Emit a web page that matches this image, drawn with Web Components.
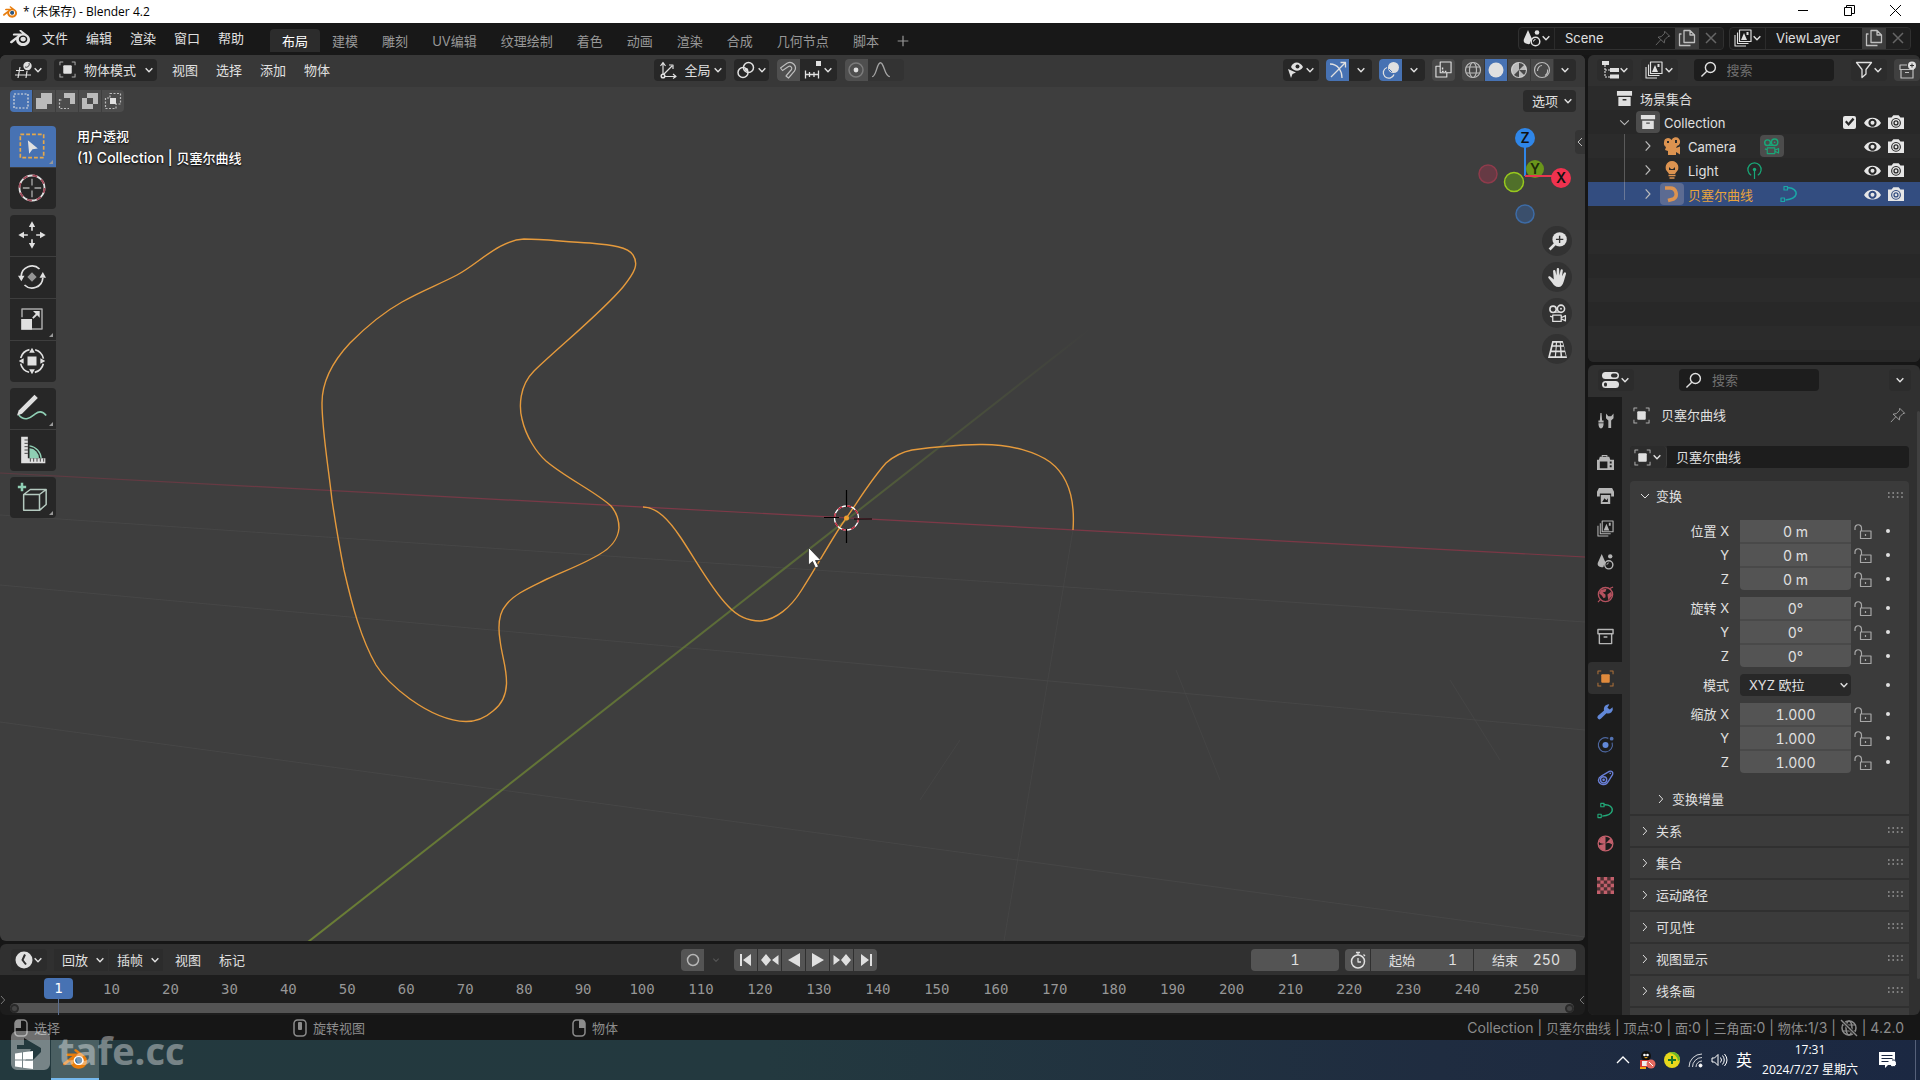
<!DOCTYPE html>
<html lang="zh-CN">
<head>
<meta charset="utf-8">
<title>* (未保存) - Blender 4.2</title>
<style>
html,body{margin:0;height:100%;overflow:hidden}
body{background:#161616;color:#e0e0e0;font:13px/18px Inter,"Noto Sans CJK SC",sans-serif}
</style>
</head>
<body>
<blender-app></blender-app>
<script>
const BASE = `
*{box-sizing:border-box}
:host{display:block}
button,input,select{appearance:none;font:inherit;color:inherit;background:none;border:0;margin:0;padding:0;outline:0;border-radius:0}
button{display:flex;align-items:center;justify-content:center;white-space:nowrap}
.dd{display:flex;align-items:center;justify-content:space-between;height:22px;padding:0 4px;background:#272727;border-radius:4px;flex:none}
.row{display:flex;align-items:center}
.sp{flex:1}
`;
function define(name, css, html, setup) {
  customElements.define(name, class extends HTMLElement {
    constructor() {
      super();
      const root = this.attachShadow({mode: 'open'});
      const t = document.createElement('template');
      t.innerHTML = `<style>${BASE}${css}</style>${typeof html === 'function' ? html(this) : html}`;
      root.append(t.content.cloneNode(true));
      if (setup) setup(root, this);
    }
  });
}

const LOGO = 'M12.51 13.214c.046-.8.438-1.506 1.03-2.006a3.424 3.424 0 0 1 2.212-.79c.85 0 1.631.3 2.211.79.592.5.983 1.206 1.028 2.005.045.823-.285 1.586-.865 2.153a3.389 3.389 0 0 1-2.374.938 3.393 3.393 0 0 1-2.376-.938c-.58-.567-.91-1.33-.865-2.152M7.35 14.831c.006.314.106.922.256 1.398a7.372 7.372 0 0 0 1.593 2.757 8.227 8.227 0 0 0 2.787 2.001 8.947 8.947 0 0 0 3.66.76 8.964 8.964 0 0 0 3.657-.772 8.285 8.285 0 0 0 2.785-2.01 7.428 7.428 0 0 0 1.592-2.762 6.964 6.964 0 0 0 .25-3.074 7.123 7.123 0 0 0-1.016-2.779 7.764 7.764 0 0 0-1.852-2.043h.002L13.566 2.55l-.02-.015c-.492-.378-1.319-.376-1.86.002-.547.382-.609 1.015-.123 1.415l-.001.001 3.126 2.543-9.53.01h-.013c-.788.001-1.545.518-1.695 1.172-.154.665.38 1.217 1.2 1.22V8.9l4.83-.01-8.62 6.617-.034.025c-.813.622-1.075 1.658-.563 2.315.52.667 1.625.668 2.447.004L7.414 14s-.069.52-.063.831zm12.09 1.741c-.97.988-2.326 1.548-3.795 1.55-1.47.004-2.827-.552-3.797-1.538a4.51 4.51 0 0 1-1.036-1.622 4.282 4.282 0 0 1 .282-3.519 4.702 4.702 0 0 1 1.153-1.371c.942-.768 2.141-1.183 3.396-1.185 1.256-.002 2.455.41 3.398 1.175.48.391.87.854 1.152 1.367a4.28 4.28 0 0 1 .522 1.706 4.236 4.236 0 0 1-.239 1.811 4.54 4.54 0 0 1-1.035 1.626';
const F = 'fill="currentColor" stroke="none"';
// Every glyph is drawn on an 18 by 18 grid.
const ICONS = {
  blender: `<g transform="scale(.75)"><path ${F} d="${LOGO}"/></g>`,
  blenderColor: `<g transform="scale(.75)"><circle cx="15.7" cy="13.2" r="6" fill="#fff" stroke="none"/><path fill="#e87d0d" stroke="none" d="${LOGO}"/><circle cx="15.7" cy="13.3" r="3.4" fill="#265787" stroke="none"/></g>`,
  chev: `<path stroke-width="2.6" d="M3 6l6 6 6-6"/>`,
  right: `<path d="M6 3l5.5 6L6 15"/>`,
  down: `<path d="M3 6l6 6 6-6"/>`,
  left: `<path d="M12 3L6 9l6 6"/>`,
  plus: `<path d="M9 1v16M1 9h16" stroke-width="1.8"/>`,
  cross: `<path d="M4 4l10 10M14 4L4 14"/>`,
  editor3d: `<path d="M5 6L3 17M12 10l-1 7M1 9.5h8M0 14h16" stroke-width="1.2"/><circle cx="12.5" cy="5" r="4.2" ${F}/><path d="M10 6a3 3 0 0 0 4-4" stroke="#272727" stroke-width=".8"/>`,
  object: `<rect x="4.5" y="4.5" width="9" height="9" rx="1" ${F}/><path opacity=".7" stroke-width="1.1" d="M1 4.5V1h3.5M13.5 1H17v3.5M17 13.5V17h-3.5M4.5 17H1v-3.5"/>`,
  orient: `<path d="M4 14V2M1.5 5L4 1.5 6.5 5M5.5 15.5h11M14 13l3 2.5-3 2M5 13l8-8M10 4h4v4" stroke-width="1.2"/><circle cx="4" cy="15" r="1.8"/>`,
  pivot: `<circle cx="11.5" cy="6.5" r="5"/><circle cx="6" cy="11.5" r="5"/><circle cx="9.5" cy="8.5" r="1.6" ${F}/>`,
  magnet: `<path opacity=".75" stroke-width="1.2" d="M1.5 7L8 2.2a5.6 5.6 0 0 1 7.4 8L9.5 17 7 15l5.500-6.500a2.200 2.200 0 0 0-3-3L3.500 9.500z"/>`,
  increment: `<path stroke-width="1.3" d="M1 13.5h14M1.5 9.5v8M5.5 11v5M10 11v5M14.5 9.5v8"/><rect x="12" y="0" width="5" height="5" ${F}/>`,
  prop: `<circle cx="9" cy="9" r="7" opacity=".3"/><circle cx="9" cy="9" r="2.4" ${F}/>`,
  falloff: `<path opacity=".65" stroke-width="1.2" d="M1 15c4 0 4-12.500 7.500-12.500S12 15 17 15"/>`,
  visibility: `<path d="M4 6c2-6 9-6 12 0-3 5-9 5-12 0z" ${F}/><circle cx="10.5" cy="5.5" r="2" fill="#272727" stroke="none"/><path ${F} d="M1 8l8 3.500-3.500 1.500-1.500 4z"/>`,
  gizmo: `<path stroke-width="1.3" d="M1 3c8 0 12 7 12 14M2 16L16 2M11.5 1.5H16.5V6.5"/>`,
  overlay: `<circle cx="11.5" cy="6.5" r="5.5" ${F}/><path stroke-width="1.3" d="M5 6.500a5.500 5.500 0 1 0 7 7"/><path stroke="#4772b3" d="M7 8l3 3" stroke-width="1"/>`,
  xray: `<rect x="5.5" y="1" width="11.5" height="11.5" stroke-width="1.2"/><path stroke-width="1.2" d="M5.5 5.5H1V17h11.5v-4.5"/><path d="M8 7v4h4" stroke-dasharray="2 1.2"/>`,
  wire: `<g opacity=".75" stroke-width="1.2"><circle cx="9" cy="9" r="7.5"/><ellipse cx="9" cy="9" rx="3.5" ry="7.5"/><path d="M2 6h14M2 12h14"/></g>`,
  solid: `<circle cx="9" cy="9" r="7.5" ${F}/>`,
  material: `<circle cx="9" cy="9" r="7.5" opacity=".8" stroke-width="1.2"/><path opacity=".75" ${F} d="M9 1.500A7.500 7.500 0 0 0 3.700 14.300L9 9zM9 9v7.500A7.500 7.500 0 0 0 14.300 14.300zM9 9h7.500A7.500 7.500 0 0 0 14.300 3.700z"/>`,
  rendered: `<circle cx="9" cy="9" r="7.5" opacity=".75" stroke-width="1.2"/><path opacity=".75" stroke-width="1.2" d="M4.500 10c0-3 2-5.500 4.500-5.500M12 14.500c2-1 3-3 2.500-6"/>`,
  selSet: `<rect x="2" y="2" width="14" height="14" stroke-dasharray="2 1.5" stroke-width="1.2"/>`,
  selAdd: `<path ${F} opacity=".75" d="M6 1h11v11h-5v5H1V6h5z"/>`,
  selSub: `<path ${F} opacity=".75" d="M6 1h11v11h-5V6H6z"/><path opacity=".75" d="M1.500 7v9.500h9.500M1.500 8H5" stroke-dasharray="2 1.5" stroke-width="1.2"/>`,
  selXor: `<path ${F} opacity=".75" fill-rule="evenodd" d="M6 1h11v11h-5v5H1V6h5zM6 6v6h6V6z"/>`,
  selAnd: `<path opacity=".75" d="M6 1.500h10.500V12H12v4.500H1.500V6H6z" stroke-dasharray="2 1.5" stroke-width="1.2"/><rect x="6" y="6" width="6" height="6" ${F}/>`,
  scene: `<path ${F} d="M5 1l4 9c0 1-2 2-2 4 0 2-3 1-5 0-1.500-1-1.500-3-1-4z"/><circle cx="12.5" cy="12.5" r="4.3"/><path d="M10.500 12.500a2 2 0 0 1 2-2" stroke-width="1"/><circle cx="14" cy="3.5" r="2.3" ${F}/>`,
  pin: `<path opacity=".6" stroke-width="1.1" d="M11 1.500l5.500 5.500-2 .5-3.500 3.500-.5 3.500L3.500 8l3.500-.5L10.500 4zM6.500 11L1 17"/>`,
  copy: `<path opacity=".8" stroke-width="1.3" d="M6 1.500h6l4.500 4.500v7.500H6zM12 1.500V6h4.500M3.500 5H1.500v11.500h11"/>`,
  layers: `<rect x="5.5" y="1" width="11.5" height="11.5" stroke-width="1.2"/><path ${F} d="M7 11l3-7 3 7zM12.500 3h2v3h-2z"/><path stroke-width="1.1" d="M3.500 3.500v11h11M1 6v11h11"/>`,
  tree: `<rect x="1" y="0" width="7" height="4" ${F}/><path d="M4 4v12h5M4 9h5" stroke-width="1.1" stroke-dasharray="2 1"/><rect x="9" y="7" width="9" height="4" ${F}/><rect x="9" y="13.5" width="9" height="4" ${F}/>`,
  search: `<circle cx="11" cy="6.8" r="5.3"/><path d="M7.200 10.800L1.500 16.500"/>`,
  filter: `<path stroke-width="1.3" d="M1.500 1.500h15l-5.500 7V13l-4 3.500v-8z"/>`,
  addColl: `<path opacity=".8" stroke-width="1.2" d="M9 4H2v4.500h14M3 8.500V17h12V9M7 11.500h4"/><circle cx="14" cy="4.5" r="4" ${F}/><path d="M14 2.500v4M12 4.500h4" stroke="#333" stroke-width="1"/>`,
  collection: `<path ${F} fill-rule="evenodd" d="M1 1h16v5H1zM2.500 7.500h13V17h-13zM7 9.500v1.500h4V9.500z"/>`,
  collTab: `<path stroke-width="1.5" d="M1 1.500h16v4.500H1zM2.500 6v10.500h13V6M7 9.500h4"/>`,
  camObj: `<path ${F} fill-rule="evenodd" d="M5 1a4 4 0 0 1 3.500 2A4.500 4.500 0 1 1 14 9l-1 2 4-1.500v8L13 15v3H5v-4l-3-1 1-3a4.300 4.300 0 0 1-2-4.500A4.500 4.500 0 0 1 5 1zM4 4v2h2V4zM12 3v3h2V3z"/>`,
  camData: `<circle cx="4.8" cy="5" r="3"/><circle cx="12.3" cy="4.5" r="3.4"/><path stroke-width="1.2" d="M6 7.800h5M4.500 10.500h8v6h-8zM12.500 13l4-2v5l-4-2M2 11.500l2.500 1"/><circle cx="12.3" cy="4.5" r=".9" ${F}/>`,
  lightObj: `<path ${F} fill-rule="evenodd" d="M9 0a6.500 6.500 0 0 1 4 11.500l-1 1.500H6l-1-1.500A6.500 6.500 0 0 1 9 0zM6 6l2 2h2l2-2v3H6z"/><path d="M5.500 14.500h7M6.500 17h5" stroke-width="1.5"/>`,
  lightData: `<path stroke-width="1.3" d="M5.500 14A7 7 0 1 1 12.500 14M9 9v9"/><circle cx="9" cy="8" r="1.8" ${F}/>`,
  curveObj: `<path stroke-width="3.6" stroke-linecap="butt" d="M2 3h5a6 6 0 0 1 3.500 11L5 15.500"/>`,
  curveData: `<path stroke-width="1.5" d="M7 3c6-1 10 3 9 6.500S11 14.500 5.500 15"/><rect x="4" y="1.5" width="3.5" height="3.5" stroke-width="1.2"/><rect x="1" y="13" width="3.5" height="3.5" stroke-width="1.2"/>`,
  eye: `<path ${F} fill-rule="evenodd" d="M0 9.500C3.500 2 14.500 2 18 9.500 14.500 16 3.500 16 0 9.500zM9 5a4.300 4.300 0 1 0 .01 0z"/><circle cx="9" cy="9.3" r="2.1" ${F}/>`,
  render: `<path ${F} fill-rule="evenodd" d="M0 4h4l2-2.500h6L14 4h4v13H0zM9 4.500a5.500 5.500 0 1 0 .01 0z"/><circle cx="9" cy="10" r="3.6" stroke-width="1.3"/><circle cx="9" cy="10" r="1.5" ${F}/>`,
  props: `<rect x="0" y="1" width="17" height="7" rx="3.5" ${F}/><rect x="9" y="2.5" width="6.5" height="4" rx="2" fill="#303030" stroke="none"/><rect x="0" y="10" width="17" height="7" rx="3.5" ${F}/><rect x="2" y="11.5" width="3" height="4" rx="1.5" fill="#303030" stroke="none"/>`,
  tool: `<path ${F} d="M3.600 1h1.200l.6 8H7v2H1.500V9H3zM1.500 12H7c0 3-1 5.500-2.800 5.500S1.500 15 1.500 12zM9.500 1.500v5L12 9v8h3V9l2.500-2.500v-5L15 4.500h-3z"/>`,
  renderTab: `<path ${F} fill-rule="evenodd" d="M0 6h2l1-3h2V1h6v2h2l1 3h4v11H0zM3 8v7h8V8zM13.500 8v2h2V8zM13.500 12v2h2v-2zM6 3h4V2H6z"/>`,
  output: `<path ${F} fill-rule="evenodd" d="M2 1h14l2 4v5h-3V7H3v3H0V5zM4 8.500h10V18H4zM5.500 16l2.500-4 2 2 1.500-2v4z"/>`,
  world: `<circle cx="9" cy="9" r="7.5"/><path ${F} d="M4 4l6-1-1 3-3 1 3 2v3l-2 1-2-3-2.500-2zM11 9l4-3 1 4-4 5z"/><path d="M13 3l4-2M1 17l3-3" stroke-width="1.2"/>`,
  wrench: `<path ${F} d="M16.500 4.500l-3 2.500-2.500-2 2-3.500A5 5 0 0 0 7.500 8L1 13.500a2 2 0 0 0 3.300 3L10 10.800a5 5 0 0 0 6.500-6.300z"/>`,
  particles: `<circle cx="9" cy="9.5" r="3.2" ${F}/><path opacity=".7" stroke-width="1.2" d="M12 2.500A7.500 7.500 0 1 0 16 7"/><circle cx="15.5" cy="2.8" r="2" ${F} opacity=".8"/>`,
  constraint: `<path stroke-width="1.4" d="M1.500 12a5.500 5.500 0 0 1 3-4.500L13 2.500c2.500-1 4.500 1 3.500 3.500L12 13a5.500 5.500 0 0 1-10.500-1z"/><circle cx="7" cy="11.5" r="3.3"/><circle cx="7" cy="11.5" r="1.4" ${F}/><circle cx="14" cy="4.5" r=".9" ${F}/>`,
  mat: `<circle cx="9" cy="9" r="7.8" stroke-width="1.4"/><path ${F} d="M9 1.500A7.500 7.500 0 0 0 2 7c1 2 4 3 7 2zM9 9c2-1 4-1 7 1a7.500 7.500 0 0 0-1.500-6.500zM2 11c2-1 5-1 7-2v7.500A7.500 7.500 0 0 1 2 11z" />`,
  checker: `<rect x="0" y="0" width="18" height="18" fill="currentColor" stroke="none" opacity=".3"/><path ${F} d="M0 0h3.600v3.600H0zM7.200 0h3.600v3.600H7.200zM14.400 0H18v3.600h-3.600zM3.600 3.600h3.600v3.600H3.600zM10.800 3.600h3.600v3.600h-3.600zM0 7.200h3.600v3.600H0zM7.200 7.200h3.600v3.600H7.200zM14.400 7.200H18v3.600h-3.600zM3.600 10.800h3.600v3.600H3.600zM10.800 10.800h3.600v3.600h-3.600zM0 14.400h3.600V18H0zM7.200 14.400h3.600V18H7.200zM14.400 14.400H18V18h-3.600z"/>`,
  lock: `<path opacity=".65" stroke-width="1.2" d="M1 8V6a3.200 3.200 0 0 1 6.500 0v3M6.500 9h10.500v7.500H6.500zM11.500 12v2"/>`,
  grip: `<path stroke="#999" stroke-width="1.6" stroke-dasharray="1.6 2.8" d="M2 6h15M2 10h15"/>`,
  clock: `<circle cx="9" cy="9" r="8.5" ${F}/><path d="M10 3.500L7.500 9l3.500 4.500" stroke="#303030" stroke-width="2"/>`,
  record: `<circle cx="9" cy="9" r="5.5" opacity=".7"/>`,
  first: `<path ${F} d="M3 3h2v12H3zM14 3v12L6 9z"/>`,
  prevKey: `<path ${F} d="M5 3l5 6-5 6-5-6zM17.500 4v10L11 9z"/>`,
  playBack: `<path ${F} d="M15 2v14L3 9z"/>`,
  play: `<path ${F} d="M3 2v14l12-7z"/>`,
  nextKey: `<path ${F} d="M13 3l5 6-5 6-5-6zM.5 4v10L7 9z"/>`,
  last: `<path ${F} d="M13 3h2v12h-2zM4 3v12l8-6z"/>`,
  timer: `<circle cx="9" cy="10.5" r="6.5"/><path d="M7 1.500h4M9 1.500v2.500M9 7v4h3M14.500 3.500l1.500 1.500" stroke-width="1.3"/>`,
  mouseL: `<rect x="3" y="1" width="12" height="16" rx="3.5"/><path ${F} d="M3 9V4.500A3.500 3.500 0 0 1 6.500 1H9v8z"/>`,
  mouseM: `<rect x="3" y="1" width="12" height="16" rx="3.5"/><rect x="7" y="3" width="4" height="8" rx="1" ${F}/>`,
  mouseR: `<rect x="3" y="1" width="12" height="16" rx="3.5"/><path ${F} d="M15 9V4.500A3.500 3.500 0 0 0 11.500 1H9v8z"/>`,
  offline: `<circle cx="9" cy="9" r="7"/><ellipse cx="9" cy="9" rx="3" ry="7"/><path d="M2.500 6h13M2.500 12h13" stroke-width="1"/><path d="M1 1l16 16" stroke="#161616" stroke-width="3"/><path d="M1 1l16 16"/>`,
  zoom: `<circle cx="11" cy="7" r="6.8" ${F}/><path d="M7 11l-5.500 5.500" stroke-width="2.6"/><path d="M11 3.500v7M7.500 7h7" stroke="#333" stroke-width="1.3"/>`,
  hand: `<path ${F} d="M5.500 11L4.800 3c0-1.600 2-1.600 2.300 0L8 7l.3-6C8.500-.4 10.400-.3 10.500 1l.3 6 1.200-5c.4-1.500 2.200-1 2 .5l-.7 5.300 1.700-3c.8-1.400 2.500-.5 2 1L15 12.500C14 16 12.500 18 10 18c-3 0-4.500-1.500-6-4L.4 9.500C-.3 8 1.300 7.300 2.400 8.300z"/>`,
  persp: `<path ${F} fill-rule="evenodd" d="M4 1h10l4 16H0zM5.200 2.500L4.700 5h2.500l.3-2.500zM8.600 2.500L8.400 5h3l-.3-2.500zM12 2.500l.4 2.500h2l-.7-2.500zM4.300 6.500l-.8 3.500H7l.3-3.500zM8.300 6.500L8 10h3.500l-.3-3.500zM12.500 6.500l.4 3.500H16l-1-3.500zM3 11.500l-1 4h4.400l.4-4zM7.900 11.500l-.3 4h4.300l-.3-4zM13 11.500l.4 4H17l-1-4z"/>`,
  tSelect: `<rect x="2" y="2" width="14" height="14" stroke="#e6a84a" stroke-width="1" stroke-dasharray="2.3 1.2"/><path ${F} d="M6.500 5.500l6 5-3.200.5-2 2.600z"/>`,
  tCursor: `<circle cx="9" cy="9" r="7.5" stroke-width="1.1"/><circle cx="9" cy="9" r="7.5" stroke="#a04858" stroke-width="1.1" stroke-dasharray="2.9 3"/><path stroke="#aaa" stroke-width=".8" d="M9 3.500v4M9 10.500v4M3.500 9h4M10.500 9h4"/>`,
  tMove: `<path ${F} d="M9 .8l1.900 3.400H7.100zM9 17.200l1.900-3.400H7.100zM.8 9l3.400-1.900v3.800zM17.200 9l-3.400-1.900v3.800z"/><path stroke-width="1" d="M9 4v2.500M9 11.500V14M4 9h2.500M11.500 9H14"/>`,
  tRotate: `<path stroke-width="1" d="M2.500 8.500a6.500 6.500 0 0 1 11-4.300M15.500 9.500a6.500 6.500 0 0 1-11 4.300"/><path ${F} d="M.6 8.200h3.900l-1.900 3.400zM13.500 9.400h3.900l-1.900-3.400z"/><path ${F} opacity=".6" d="M9 6.200L11.800 9 9 11.800 6.200 9z"/>`,
  tScale: `<path opacity=".7" stroke-width=".9" d="M3 8V3h12v12H9"/><rect x="2.5" y="9" width="6.5" height="6.5" ${F}/><path d="M9.500 8.500L12 6" stroke-width="1.1"/><path ${F} d="M13.600 4.200v4l-4-4z"/>`,
  tTransform: `<circle cx="9" cy="9" r="7" stroke-width="1" stroke-dasharray="7.5 3.5" stroke-dashoffset="-1.7"/><rect x="6.3" y="6.3" width="5.4" height="5.4" ${F}/><path ${F} d="M9 1l1.700 3H7.300zM9 17l1.700-3H7.300zM1 9l3-1.700v3.400zM17 9l-3-1.700v3.400z"/>`,
  tDraw: `<path stroke="#8fcfb4" stroke-width="1" d="M1 13c4 5 8 1 10-.5s4.500-1.500 6.500 1"/><path ${F} d="M10.500 1l2 2-9.500 9.500-3 1 1-3z"/>`,
  tMeasure: `<path ${F} d="M3 1h3.500v13H17v3H2.500V1z"/><path d="M7.500 6.500A8 8 0 0 1 14.500 14" stroke="#8fcfb4" stroke-width=".8"/><path fill="#8fcfb4" stroke="none" d="M7.500 8a6 6 0 0 1 5.700 6H7.500z"/><path stroke="#272727" stroke-width=".5" d="M4.500 3H6.500M4.500 5H6.500M4.500 7H6.500M4.500 9H6.500M4.500 11H6.500M8 14v2M10 14v2M12 14v2M14 14v2M16 14v2"/>`,
  tCube: `<path stroke-width="1.5" stroke="#8fcfb4" d="M.5 3h5M3 .5v5"/><path opacity=".9" stroke="#c4dbd0" stroke-width=".9" d="M4 7.500h9.500V17H4zM4 7.500l4-3h9.500v9l-4 3.500M13.500 7.500l4-3"/>`,
};
customElements.define('b-icon', class extends HTMLElement {
  constructor() { super(); this.attachShadow({mode: 'open'}); }
  connectedCallback() {
    const s = this.getAttribute('size') || 18;
    this.shadowRoot.innerHTML = `<style>:host{display:inline-flex;flex:none}svg{display:block;overflow:visible}</style>
      <svg width="${s}" height="${s}" viewBox="0 0 18 18" fill="none" stroke="currentColor" stroke-width="1.5" stroke-linejoin="round" aria-hidden="true">${ICONS[this.getAttribute('name')] || ''}</svg>`;
  }
});
const ic = (n, s) => `<b-icon name="${n}"${s ? ` size="${s}"` : ''}></b-icon>`;
const dd = (n, label, w, s) => `<button class="dd" aria-label="${label}" style="width:${w}px">${ic(n, s)}${ic('chev', 10)}</button>`;

define('title-bar', `
:host{height:23px;background:#fff;color:#000;font:12px/23px "Open Sans","Noto Sans CJK SC",sans-serif}
.row{height:23px;padding:0 2px 0 3px;gap:6px}
.w{display:flex;align-self:flex-start}
button{width:46px;height:21px}
`, `<div class="row">${ic('blenderColor', 14)}<span>* (未保存) - Blender 4.2</span><span class="sp"></span>
<div class="w"><button aria-label="最小化"><svg width="11" height="11"><path d="M0 5.500h10" stroke="#000"/></svg></button>
<button aria-label="还原"><svg width="11" height="11" fill="none" stroke="#000"><path d="M.5 2.500h7v8h-7zM2.500 2.500v-2h8v8h-3"/></svg></button>
<button aria-label="关闭"><svg width="11" height="11"><path d="M0 0l11 11M11 0L0 11" stroke="#000"/></svg></button></div></div>`);

define('id-selector', `
:host{display:flex;height:23px;border-radius:4px;background:#1b1b1b;border:1px solid #303030;overflow:hidden}
.dd{width:36px;height:21px;background:none;border-right:1px solid #2b2b2b;border-radius:0}
input{width:var(--field);padding-left:10px;height:21px;min-width:0}
button.i{width:24px;height:21px;color:#999}
button.n{background:#3c3c3c;color:#e0e0e0}
.x{opacity:.6;background:#252525}
`, el => `<button class="dd" aria-label="浏览">${ic(el.getAttribute('icon'))}${ic('chev', 10)}</button>
<input aria-label="名称" value="${el.getAttribute('value')}">
${el.hasAttribute('pin') ? `<button class="i" aria-label="固定">${ic('pin', 16)}</button>` : ''}
<button class="i n" aria-label="新建">${ic('copy')}</button><button class="i x" aria-label="移除">${ic('cross')}</button>`);

define('top-bar', `
:host{display:flex;align-items:center;height:32px;background:#181818;padding:0 9px 2px 10px}
nav{display:flex;gap:18px;margin:0 26px 0 12px}
.tabs{display:flex;align-items:flex-end;height:30px;padding-bottom:1px}
.tabs button{height:23px;padding:0 12px;color:#989898;border-radius:4px 4px 0 0}
.tabs button[aria-selected=true]{background:#2c2c2c;color:#fff}
.tabs .add{padding:0 6px}
id-selector+id-selector{margin-left:5px}
`, `${ic('blender', 20)}<nav>${['文件','编辑','渲染','窗口','帮助'].map(t => `<button>${t}</button>`).join('')}</nav>
<div class="tabs" role="tablist">${['布局','建模','雕刻','UV编辑','纹理绘制','着色','动画','渲染','合成','几何节点','脚本'].map((t, i) => `<button role="tab" aria-selected="${!i}">${t}</button>`).join('')}<button class="add" aria-label="添加工作区">${ic('plus', 12)}</button></div>
<span class="sp"></span>
<id-selector icon="scene" value="Scene" pin style="--field:96px"></id-selector>
<id-selector icon="layers" value="ViewLayer" style="--field:96px"></id-selector>`);

define('tool-shelf', `
:host{display:flex;flex-direction:column;gap:6px;width:46px}
.g{display:flex;flex-direction:column;gap:1px;border-radius:4px;overflow:hidden}
button{position:relative;height:41px;padding:0 2px 1px 0;background:#272727}
button.on{background:#4772b3}
.m::after{content:"";position:absolute;right:3px;bottom:3px;border:2px solid transparent;border-right-color:#999;border-bottom-color:#999}
`, [[['tSelect','框选','on m'],['tCursor','游标','']],
    [['tMove','移动',''],['tRotate','旋转',''],['tScale','缩放','m'],['tTransform','变换','']],
    [['tDraw','标注','m'],['tMeasure','测量','']],
    [['tCube','添加立方体','m']]].map(g => `<div class="g">${g.map(([n, l, c]) => `<button class="${c}" aria-label="${l}">${ic(n, 30)}</button>`).join('')}</div>`).join(''));

define('nav-gizmo', `
:host{display:flex;flex-direction:column;align-items:flex-end;width:100px}
svg{display:block;font:600 14px Inter,sans-serif}
.n{display:flex;flex-direction:column;gap:6px;margin-right:3px}
.n button{width:30px;height:30px;border-radius:50%;background:#323232}
`, `<svg width="100" height="100" viewBox="0 0 100 100" text-anchor="middle" fill="#111">
<circle cx="13" cy="48" r="9" fill="#663a44" stroke="#8e3b4b" stroke-width="1.5"/>
<circle cx="50" cy="88" r="9" fill="#3a4f6c" stroke="#3d6ba5" stroke-width="1.5"/>
<circle cx="60" cy="43" r="9" fill="#6a951b"/><text x="60" y="48" fill="#1d2a08">Y</text>
<path d="M50 50V20" stroke="#2f86e8" stroke-width="2"/><path d="M50 50h30" stroke="#e8374f" stroke-width="2"/>
<circle cx="39" cy="56" r="9.5" fill="#50702a" stroke="#98c81e" stroke-width="1.5"/>
<circle cx="50" cy="12" r="10" fill="#2f86e8"/><text x="50" y="17">Z</text>
<circle cx="86" cy="52" r="10" fill="#f0324f"/><text x="86" y="57">X</text></svg>
<div class="n">${[['zoom','缩放'],['hand','平移'],['camData','摄像机视图'],['persp','透视/正交']].map(([n, l]) => `<button aria-label="${l}">${ic(n, 19)}</button>`).join('')}</div>`);

define('view-3d', `
:host{position:relative;display:flex;flex-direction:column;background:#3e3e3e;border-radius:6px;overflow:hidden;min-height:0}
.scene{position:absolute;inset:0;width:100%;height:100%}
.head{position:relative;height:32px;padding:0 9px 3px 11px;background:#383838;justify-content:space-between}
.head>div{display:flex;align-items:center}
.head .dd{margin-right:7px}
.menus{display:flex;gap:18px}
.field{display:flex;align-items:center;height:22px;padding:0 3px 0 5px;background:#272727;border-radius:4px}
.field select{flex:none;margin-left:8px}
.field b-icon:last-child{margin-left:auto}
.mid{gap:8px;margin-right:56px}
.mid .dd{margin:0}
.pair{display:flex;border-radius:4px;overflow:hidden;background:#272727}
.pair button{width:23px;height:22px}
.pair .dd{border-radius:0}
.lt{background:#4f4f4f}
.on{background:#4772b3}
.rt{gap:7px}
.rt .dd{margin:0}
.pair.shade{gap:1px;background:none}
.pair.shade button{background:#484848;width:22px}
.pair.shade button.on{background:#4772b3}
.pair.shade button.e{background:#2b2b2b}
.sub{position:relative;height:28px;padding:0 9px 0 10px;justify-content:space-between}
.opt{height:22px;gap:5px;padding:0 3px 0 9px;background:#2b2b2b;border-radius:4px}
.sel{display:flex;gap:1px;border-radius:4px;overflow:hidden}
.sel button{width:22px;height:22px;background:#4c4c4c}
.sel button.on{background:#4772b3}
.body{position:relative;display:flex;align-items:flex-start;padding:11px 10px 0 10px}
.info{flex:1;margin-left:21px;font-weight:500;line-height:21px;color:#fff;text-shadow:0 1px 2px #000}
.info .n{font-size:14px}
.fold{position:absolute;right:0;top:75px;width:10px;height:24px;background:#343434;border-radius:4px 0 0 4px;color:#bbb}
`, `<svg class="scene" viewBox="0 55 1585 886" preserveAspectRatio="xMidYMid slice" fill="none">
<defs><linearGradient id="gy" gradientUnits="userSpaceOnUse" x1="310" y1="941" x2="1090" y2="329"><stop offset="0" stop-color="#6b7f35"/><stop offset=".6" stop-color="#5a6a38"/><stop offset="1" stop-color="#5a6a38" stop-opacity="0"/></linearGradient>
<linearGradient id="rx" gradientUnits="userSpaceOnUse" x1="0" y1="0" x2="1585" y2="0"><stop offset="0" stop-color="#7a3745" stop-opacity=".5"/><stop offset=".4" stop-color="#7f3948"/><stop offset="1" stop-color="#7a3745"/></linearGradient></defs>
<g stroke="#494949"><path d="M0 515L1585 622M0 585L1585 730M0 722L1585 937" opacity=".8"/><path d="M1073 530L1004 941M960 740L920 800M1176 670L1220 780M1450 680L1500 760" opacity=".6"/></g>
<path d="M0 473L1585 557" stroke="url(#rx)" stroke-width="1.2"/>
<path d="M308 942L1090 329" stroke="url(#gy)" stroke-width="2"/>
<g stroke="#e59a3c" stroke-width="1.4" stroke-linejoin="round">
<path d="M322 403C322 380 335 359 350 343C367 326 384 312 402 302C421 291 440 284 457 275C478 264 499 240 524 239C544 239 566 242 590 243C612 245 628 247 633 255C639 264 635 272 623 287C603 311 560 346 534 371C519 386 519 407 522 419C526 437 537 453 546 461C566 478 596 492 611 506C617 513 619 520 619 528C618 540 609 549 600 554C584 564 564 571 547 579C531 587 514 594 506 605C498 614 498 627 500 640C502 657 507 668 506.500 684C506 697 501 705 493 711C484 719 474 721.500 466 721.500C445 721 424 709 410 699C395 688 384 678 376 665C361 639 352 605 344 570C338 540 335 520 332 500C328 464 322 430 322 403Z"/>
<path d="M643 507C657 507 669 520 681 538C697 562 712 590 728 606C738 617 748 621 760 621C776 620 791 607 801 591C818 565 833 536 847 517C857 503 870 481 886 463C894 456 902 452 912 450C934 447 957 445 980 444.500C1013 444 1037 453 1050 462C1070 477 1075 502 1073 530"/></g>
<circle cx="846.5" cy="518" r="12" stroke="#fff" stroke-width="1.3"/><circle cx="846.5" cy="518" r="12" stroke="#c01f35" stroke-width="1.4" stroke-dasharray="4.7 4.7"/>
<path stroke="#000" stroke-width="1.2" d="M846.500 490v17M846.500 529v14M824 517.500h15M854 519h18"/><circle cx="846.5" cy="518" r="2.5" fill="#f0a030"/>
<path d="M808.500 547.500v17.500l4-3.500 3 6.500 3-1.500-3-6h5.500z" fill="#fff" stroke="#222" stroke-width=".7"/>
</svg>
<div class="row head"><div>${dd('editor3d', '编辑器类型', 36)}
<label class="field" style="width:103px">${ic('object', 17)}<select aria-label="交互模式"><option>物体模式</option><option>编辑模式</option></select>${ic('chev', 10)}</label>
<div class="menus" style="margin-left:15px">${['视图','选择','添加','物体'].map(t => `<button>${t}</button>`).join('')}</div></div>
<div class="mid"><label class="field" style="width:72px">${ic('orient')}<select aria-label="变换坐标系"><option>全局</option><option>局部</option></select>${ic('chev', 10)}</label>
<button class="dd" style="width:35px;padding:0 2px 0 3px" aria-label="轴心点">${ic('pivot')}${ic('chev', 10)}</button>
<div class="pair"><button class="lt" aria-label="吸附">${ic('magnet')}</button>${dd('increment', '吸附至', 37)}</div>
<div class="pair" style="background:#333"><button class="lt" aria-label="衰减编辑">${ic('prop')}</button><button style="width:36px;padding-left:3px;justify-content:flex-start" aria-label="衰减类型" disabled>${ic('falloff', 20)}</button></div></div>
<div class="rt">${dd('visibility', '可选性与可见性', 36)}
<div class="pair"><button class="on" aria-label="显示控件">${ic('gizmo')}</button><button aria-label="控件选项">${ic('chev', 10)}</button></div>
<div class="pair"><button class="on" aria-label="显示叠加层">${ic('overlay')}</button><button aria-label="叠加层选项">${ic('chev', 10)}</button></div>
<div class="pair"><button style="background:#484848" aria-label="透视模式">${ic('xray', 17)}</button></div>
<div class="pair shade"><button aria-label="线框">${ic('wire')}</button><button class="on" aria-label="实体">${ic('solid')}</button><button aria-label="材质预览">${ic('material')}</button><button aria-label="渲染">${ic('rendered')}</button><button class="e" aria-label="着色选项">${ic('chev', 10)}</button></div></div></div>
<div class="row sub"><div class="sel">${[['selSet','新选择'],['selAdd','扩展'],['selSub','减去'],['selXor','反转'],['selAnd','交集']].map(([n, l], i) => `<button class="${i ? '' : 'on'}" aria-label="${l}">${ic(n)}</button>`).join('')}</div>
<button class="opt">选项${ic('chev', 10)}</button></div>
<div class="body"><tool-shelf></tool-shelf><div class="info">用户透视<br><span class="n">(1) Collection | </span>贝塞尔曲线</div><nav-gizmo></nav-gizmo></div>
<button class="fold" aria-label="展开侧栏">${ic('left', 12)}</button>`);

define('time-line', `
:host{background:#1d1d1d;border-radius:6px;overflow:hidden;height:71px;position:relative}
.head{height:31px;background:#303030;padding:0 9px 0 11px;justify-content:space-between}
.head>div{display:flex;align-items:center}
.dd{background:#2c2c2c}
.lead{gap:7px}
.pop{height:22px;padding:0 3px 0 8px;background:#2c2c2c;justify-content:space-between;width:54px}
.pops{display:flex;gap:1px}
.menus{display:flex;gap:18px;margin-left:5px}
.play{display:flex;gap:1px;border-radius:4px;overflow:hidden}
.play button,.rec{width:23px;height:22px;background:#545454}
.rec{border-radius:4px 0 0 4px}
.off{width:24px;height:22px;color:#555;margin-right:6px}
.mid{margin-left:62px}
.val{display:flex;align-items:center;height:22px;background:#545454}
input{font-size:14px;font-variant-numeric:tabular-nums}
.val input{text-align:right;width:40px}
.cur{width:88px;text-align:center;border-radius:4px;height:22px;background:#545454;margin-right:6px}
.rng{display:flex;gap:1px;border-radius:4px;overflow:hidden}
.rng>label{justify-content:space-between;width:102px;padding:0 16px 0 18px}
.rng button{width:25px;height:22px;background:#545454}
.ruler{display:flex;align-items:center;height:27px;padding:0 29px 0 44px;font:14px/20px "DejaVu Sans Mono",monospace;color:#979797}
.ruler b{width:29px;height:21px;margin-right:9px;border-radius:4px;background:#4772b3;color:#fff;text-align:center;font-weight:400}
.ruler span{flex:1;text-align:center}
.bar{display:flex;justify-content:space-between;align-items:center;height:10px;margin:1px 11px 0 10px;border-radius:5px;background:#545454}
.bar i{width:9px;height:9px;border:2px solid #2a2a2a;border-radius:50%;background:#454545}
.stem{position:absolute;left:58px;top:55px;width:1px;height:16px;background:#5c6f8f}
.c{position:absolute;top:50px;color:#777}
`, `<div class="row head"><div class="lead">${dd('clock', '编辑器类型', 36)}<div class="pops"><button class="pop">回放${ic('chev', 10)}</button><button class="pop">插帧${ic('chev', 10)}</button></div><div class="menus"><button>视图</button><button>标记</button></div></div>
<div class="mid"><button class="rec" aria-label="自动插帧">${ic('record')}</button><button class="off" aria-label="自动插帧选项" disabled>${ic('chev', 8)}</button>
<div class="play">${[['first','跳到起点'],['prevKey','上一关键帧'],['playBack','倒放'],['play','播放'],['nextKey','下一关键帧'],['last','跳到终点']].map(([n, l]) => `<button aria-label="${l}">${ic(n)}</button>`).join('')}</div></div>
<div><input class="cur" aria-label="当前帧" value="1"><div class="rng"><button aria-label="使用预览范围">${ic('timer')}</button><label class="val">起始<input value="1"></label><label class="val">结束<input value="250"></label></div></div></div>
<div class="ruler"><b>1</b>${Array.from({length: 25}, (_, i) => `<span>${(i + 1) * 10}</span>`).join('')}</div>
<div class="bar"><i></i><i></i></div><div class="stem"></div>
<b-icon class="c" style="left:-3px" name="right" size="12"></b-icon><b-icon class="c" style="right:-3px" name="left" size="12"></b-icon>`);

define('search-box', `
:host{display:flex}
label{display:flex;align-items:center;gap:10px;width:140px;height:22px;padding-left:6px;background:#1d1d1d;border-radius:4px}
input{width:90px}
input::placeholder{color:#707070;opacity:1}
`, `<label>${ic('search', 17)}<input type="text" placeholder="搜索" aria-label="搜索"></label>`);

define('out-liner', `
:host{background:#282828;border-radius:6px;overflow:hidden;height:307px;display:flex;flex-direction:column}
.head{height:31px;background:#303030;padding:0 0 2px 9px;width:332px;overflow:hidden}
.head .dd{background:#2c2c2c;height:22px}
ul{list-style:none;margin:0;padding:0;flex:1;background:repeating-linear-gradient(#2b2b2b 0 24px,#282828 24px 48px)}
li{display:flex;align-items:center;height:24px;padding-right:16px}
li.on{background:#334d80;color:#e8a33c}
.tw{width:24px;display:flex;justify-content:center;color:#bbb}
.ic{width:24px;height:22px;display:flex;align-items:center;justify-content:center;border-radius:4px;color:#e0e0e0}
.bg{background:#4c4c4c}
li.on .bg{background:#5c6b92}
.ic.ob{color:#dc9350}
.nm{margin:0 8px 0 4px;padding-top:2px}
li b-icon[name=eye]{margin-right:7px}
.vis{display:flex;align-items:center;color:#e6e6e6}
input{width:13px;height:13px;margin-right:8px;background:#e6e6e6;border-radius:2px}
input::before{content:"";display:block;width:13px;height:13px;background:#282828;clip-path:polygon(15% 50%,28% 38%,42% 55%,74% 18%,88% 30%,43% 80%)}
.dt{display:flex;align-items:center;justify-content:center;width:24px;height:22px;margin-left:16px;border-radius:4px;color:#18a878}
.k{background:linear-gradient(#5a5a5a,#5a5a5a) 36px 0/1px 24px no-repeat}
.k.on{background:linear-gradient(#6a7897,#6a7897) 36px 0/1px 18px no-repeat #334d80}
`, `<div class="row head">${dd('tree', '显示模式', 36)}<span style="width:8px"></span>${dd('layers', '视图层', 37)}<span style="width:17px"></span><search-box></search-box><span style="width:19px"></span>${dd('filter', '过滤', 36)}<span style="width:7px"></span><button class="dd" style="background:#404040" aria-label="新建集合">${ic('addColl')}</button></div>
<ul>
<li><span class="ic" style="margin-left:24px">${ic('collection', 17)}</span><span class="nm">场景集合</span></li>
<li><span class="tw" style="margin-left:24px">${ic('down', 13)}</span><span class="ic bg">${ic('collection', 16)}</span><span class="nm">Collection</span><span class="sp"></span><span class="vis"><input type="checkbox" checked aria-label="启用 Collection">${ic('eye', 17)}${ic('render', 16)}</span></li>
<li class="k"><span class="tw" style="margin-left:48px">${ic('right', 14)}</span><span class="ic ob">${ic('camObj')}</span><span class="nm">Camera</span><span class="dt bg">${ic('camData', 17)}</span><span class="sp"></span><span class="vis">${ic('eye', 17)}${ic('render', 16)}</span></li>
<li class="k"><span class="tw" style="margin-left:48px">${ic('right', 14)}</span><span class="ic ob">${ic('lightObj')}</span><span class="nm">Light</span><span class="dt">${ic('lightData', 17)}</span><span class="sp"></span><span class="vis">${ic('eye', 17)}${ic('render', 16)}</span></li>
<li class="k on"><span class="tw" style="margin-left:48px">${ic('right', 14)}</span><span class="ic bg ob">${ic('curveObj')}</span><span class="nm">贝塞尔曲线</span><span class="dt" style="color:#1ba7a6">${ic('curveData')}</span><span class="sp"></span><span class="vis">${ic('eye', 17)}${ic('render', 16)}</span></li>
</ul>`);

define('prop-group', `
:host{display:grid;gap:2px;grid-auto-rows:22px}
.r{display:grid;grid-template-columns:99px 111px 24px 26px;align-items:center}
label{display:contents}
.l{text-align:right;padding-right:11px}
input{height:22px;width:111px;background:#545454;text-align:center;font-size:14px;font-variant-numeric:tabular-nums;box-shadow:0 1px 0 #494949,0 2px 0 #494949}
.r:first-child input{border-radius:4px 4px 0 0}
.r:last-child input{border-radius:0 0 4px 4px;box-shadow:none}
.k{color:#e0e0e0}
.d{display:flex;justify-content:center}
.d::before{content:"";width:4px;height:4px;border-radius:50%;background:#e0e0e0}
.sel{display:flex;align-items:center;height:22px;background:#282828;border-radius:4px;padding:0 2px 0 9px}
select{flex:1}
`, el => {
  const name = el.getAttribute('label');
  if (el.hasAttribute('mode')) return `<div class="r"><label><span class="l">${name}</span><span class="sel"><select><option>XYZ 欧拉</option><option>四元数</option></select>${ic('chev', 10)}</span></label><span></span><button class="d" aria-label="动画属性"></button></div>`;
  return ['X','Y','Z'].map((a, i) => `<div class="r"><label><span class="l">${i ? a : name + ' ' + a}</span><input value="${el.getAttribute('value')}"></label><button class="k" aria-label="锁定 ${a}">${ic('lock')}</button><button class="d" aria-label="动画属性"></button></div>`).join('');
});

define('prop-panel', `
:host{background:#3b3b3b;margin-bottom:2px}
.h{height:30px;width:100%;justify-content:flex-start;padding:0 5px 0 9px;gap:5px}
.h b-icon:last-child{margin-left:auto}
`, el => `<button class="h" aria-expanded="${el.hasAttribute('open')}">${ic(el.hasAttribute('open') ? 'down' : 'right', 12)}<slot name="title"></slot>${ic('grip')}</button><slot></slot>`);

define('prop-editor', `
:host{display:flex;flex-direction:column;background:#303030;border-radius:6px;overflow:hidden;flex:1;min-height:0}
.head{height:32px;flex:none;padding:0 9px 2px 10px}
.dd{background:#2c2c2c}
.main{display:flex;flex:1;min-height:0}
.tabs{display:flex;flex-direction:column;width:34px;background:#1c1c1c;color:#b5b5b5;padding-top:7px;flex:none;gap:1px}
.tabs button{height:32px;width:34px}
.tabs .g{margin-top:9px}
.tabs .on{background:#303030;border-radius:4px 0 0 4px}
.col{flex:1;min-width:0;padding:0 8px 0 8px;overflow:hidden}
.crumb{height:36px;padding:0 3px;gap:11px}
.id{display:flex;height:22px;margin:13px 0;background:#282828;border-radius:4px;overflow:hidden}
.id .dd{width:37px;border-right:1px solid #3a3a3a}
.id input{flex:1;min-width:0;padding-left:9px;background:#1d1d1d}
.groups{display:flex;flex-direction:column;gap:7px;padding:9px 0 11px 11px}
.sub{height:30px;padding-left:25px;gap:5px;width:100%;justify-content:flex-start}
prop-panel[open]{border-radius:4px 4px 0 0}
.sc{width:3px;margin-top:14px;height:568px;background:#404040;border-radius:2px}
`, `<div class="row head">${dd('props', '编辑器类型', 36)}<span style="width:45px"></span><search-box></search-box><span class="sp"></span><button class="dd" style="width:22px;justify-content:center" aria-label="选项">${ic('chev', 10)}</button></div>
<div class="main"><div class="tabs" role="tablist">${[['tool','工具'],['renderTab','渲染','g'],['output','输出'],['layers','视图层'],['scene','场景'],['world','世界环境','','#b5525f'],['collTab','集合','g'],['object','物体','on g','#e08a3c'],['wrench','修改器','','#6288d8'],['particles','粒子','','#6288d8'],['constraint','物体约束','','#6a80d8'],['curveData','数据','','#22a878'],['mat','材质','','#c25f6b'],['checker','纹理','g','#c25f6b']].map(([n, l, c, k]) => `<button role="tab" class="${c || ''}" aria-label="${l}"${k ? ` style="color:${k}"` : ''}>${ic(n, 17)}</button>`).join('')}</div>
<div class="col"><div class="row crumb">${ic('object', 17)}<span>贝塞尔曲线</span><span class="sp"></span>${ic('pin', 16)}</div>
<div class="id"><button class="dd" aria-label="浏览物体">${ic('object', 17)}${ic('chev', 10)}</button><input aria-label="物体名称" value="贝塞尔曲线"></div>
<prop-panel open><span slot="title">变换</span><div class="groups"><prop-group label="位置" value="0 m"></prop-group><prop-group label="旋转" value="0°"></prop-group><prop-group label="模式" mode></prop-group><prop-group label="缩放" value="1.000"></prop-group></div><button class="sub">${ic('right', 12)}变换增量</button></prop-panel>
${['关系','集合','运动路径','可见性','视图显示','线条画'].map(t => `<prop-panel><span slot="title">${t}</span></prop-panel>`).join('')}<prop-panel></prop-panel></div><div class="sc"></div></div>`);

define('status-bar', `
:host{height:25px;color:#8c8c8c;display:grid;grid-template-columns:279px 279px 1fr auto;align-items:center;padding:0 16px 0 12px}
span{display:flex;align-items:center;gap:4px;white-space:pre}
.s{gap:0;font-size:14px}
.s b{font-weight:400;font-size:13px}
`, `<span>${ic('mouseL')}选择</span><span>${ic('mouseM')}旋转视图</span><span>${ic('mouseR')}物体</span><span class="s">Collection | <b>贝塞尔曲线</b> | <b>顶点</b>:0 | <b>面</b>:0 | <b>三角面</b>:0 | <b>物体</b>:1/3 | ${ic('offline')} | 4.2.0</span>`);

define('task-bar', `
:host{display:flex;align-items:center;height:40px;background:linear-gradient(90deg,#23393e,#23393f 40%,#1f2c40 75%,#1b2842);color:#fff;position:relative;font:12px/20px "Open Sans","Noto Sans CJK SC",sans-serif}
.st{width:51px;height:40px;padding-right:3px}
.app{width:48px;height:40px;background:#4a5f62;border-bottom:2px solid #76b9ed}
.tray{display:flex;align-items:center;gap:8px}
.ime{font-size:16px}
.ck{text-align:center;width:100px;margin:0 7px 0 8px}
.end{width:1px;height:40px;background:#56617a;margin:0 4px 0 10px}
.wm{position:absolute;left:11px;top:-10px;display:flex;align-items:center;gap:8px;color:#fff;opacity:.38;font:700 38px/40px "Open Sans",sans-serif}
`, `<button class="st" aria-label="开始"><svg width="18" height="18" viewBox="0 0 18 18" fill="#fff"><path d="M0 2.500l7-1v7H0zM8 1.300L18 0v8.500H8zM0 9.500h7v7l-7-1zM8 9.500h10V18l-10-1.300z"/></svg></button><button class="app" aria-label="Blender">${ic('blenderColor', 24)}</button><span class="sp"></span>
<div class="tray"><svg width="16" height="16" fill="none" stroke="#fff" stroke-width="1.3"><path d="M2 11l6-6 6 6"/></svg>
<svg width="17" height="18" viewBox="0 0 17 18"><ellipse cx="7" cy="5" rx="5" ry="5" fill="#111"/><path d="M1 9h12l2 7H1z" fill="#d33a35"/><circle cx="5.5" cy="4" r="1.3" fill="#fff"/><circle cx="8.5" cy="4" r="1.3" fill="#fff"/><path d="M5 6h4l-2 1.500z" fill="#f2a516"/><path d="M3 10h6v5H3z" fill="#eee"/><circle cx="12" cy="13" r="4.5" fill="#e4695f"/><path d="M10 11l4 4" stroke="#fff"/><path d="M1 16h6v2H1z" fill="#f2a516"/></svg>
<svg width="16" height="16"><circle cx="8" cy="8" r="8" fill="#e8d81c"/><path d="M8 0a8 8 0 0 1 8 8l-2 1a9 9 0 0 0-9-8z" fill="#6ab82a"/><path d="M8 4v8M4 8h8" stroke="#19752a" stroke-width="2"/></svg>
<svg width="15" height="15" fill="none" stroke="#fff"><path d="M1 14A13 13 0 0 1 14 1M4.500 14A9.500 9.500 0 0 1 14 4.500M8 14a6 6 0 0 1 6-6" opacity=".8"/><circle cx="12.5" cy="12.5" r="1.5" fill="#fff"/></svg>
<svg width="17" height="16" fill="none" stroke="#fff"><path d="M1 6h2.500L7 2.500v11L3.500 10H1zM9.500 5.500q2 2.500 0 5M11.500 3.500q3.500 4.500 0 9M13.500 2q5 6 0 12"/></svg>
<span class="ime">英</span></div><time class="ck">17:31<br>2024/7/27 星期六</time>
<button aria-label="通知" style="width:36px;margin-left:2px"><svg width="18" height="18"><path d="M1 1h16v13h-7l-3 3v-3H1z" fill="#fff"/><path d="M3.500 4.500h11M3.500 7.500h11M3.500 10.500h7" stroke="#1b2842"/><path d="M12 14a3.500 3.500 0 1 0 2-5" stroke="#1b2842" fill="#fff"/></svg></button><span class="end"></span>
<div class="wm"><svg width="39" height="39" viewBox="0 0 39 39" fill="#fff"><path fill-rule="evenodd" d="M6 0h27a6 6 0 0 1 6 6v27a6 6 0 0 1-6 6H6a6 6 0 0 1-6-6V6a6 6 0 0 1 6-6zM13 7v7H6v4h14l-7 14 8-2 9-9V17z"/></svg><span>tafe.cc</span></div>`);

define('blender-app', `
:host{display:flex;flex-direction:column;height:100vh}
main{display:flex;gap:3px;flex:1;min-height:0}
.l{display:flex;flex-direction:column;gap:3px;flex:1;min-width:0}
.r{display:flex;flex-direction:column;gap:3px;width:332px}
view-3d{flex:1}
`, `<title-bar></title-bar><top-bar></top-bar>
<main><div class="l"><view-3d></view-3d><time-line></time-line></div><div class="r"><out-liner></out-liner><prop-editor></prop-editor></div></main>
<status-bar></status-bar><task-bar></task-bar>`);
</script>
</body>
</html>
